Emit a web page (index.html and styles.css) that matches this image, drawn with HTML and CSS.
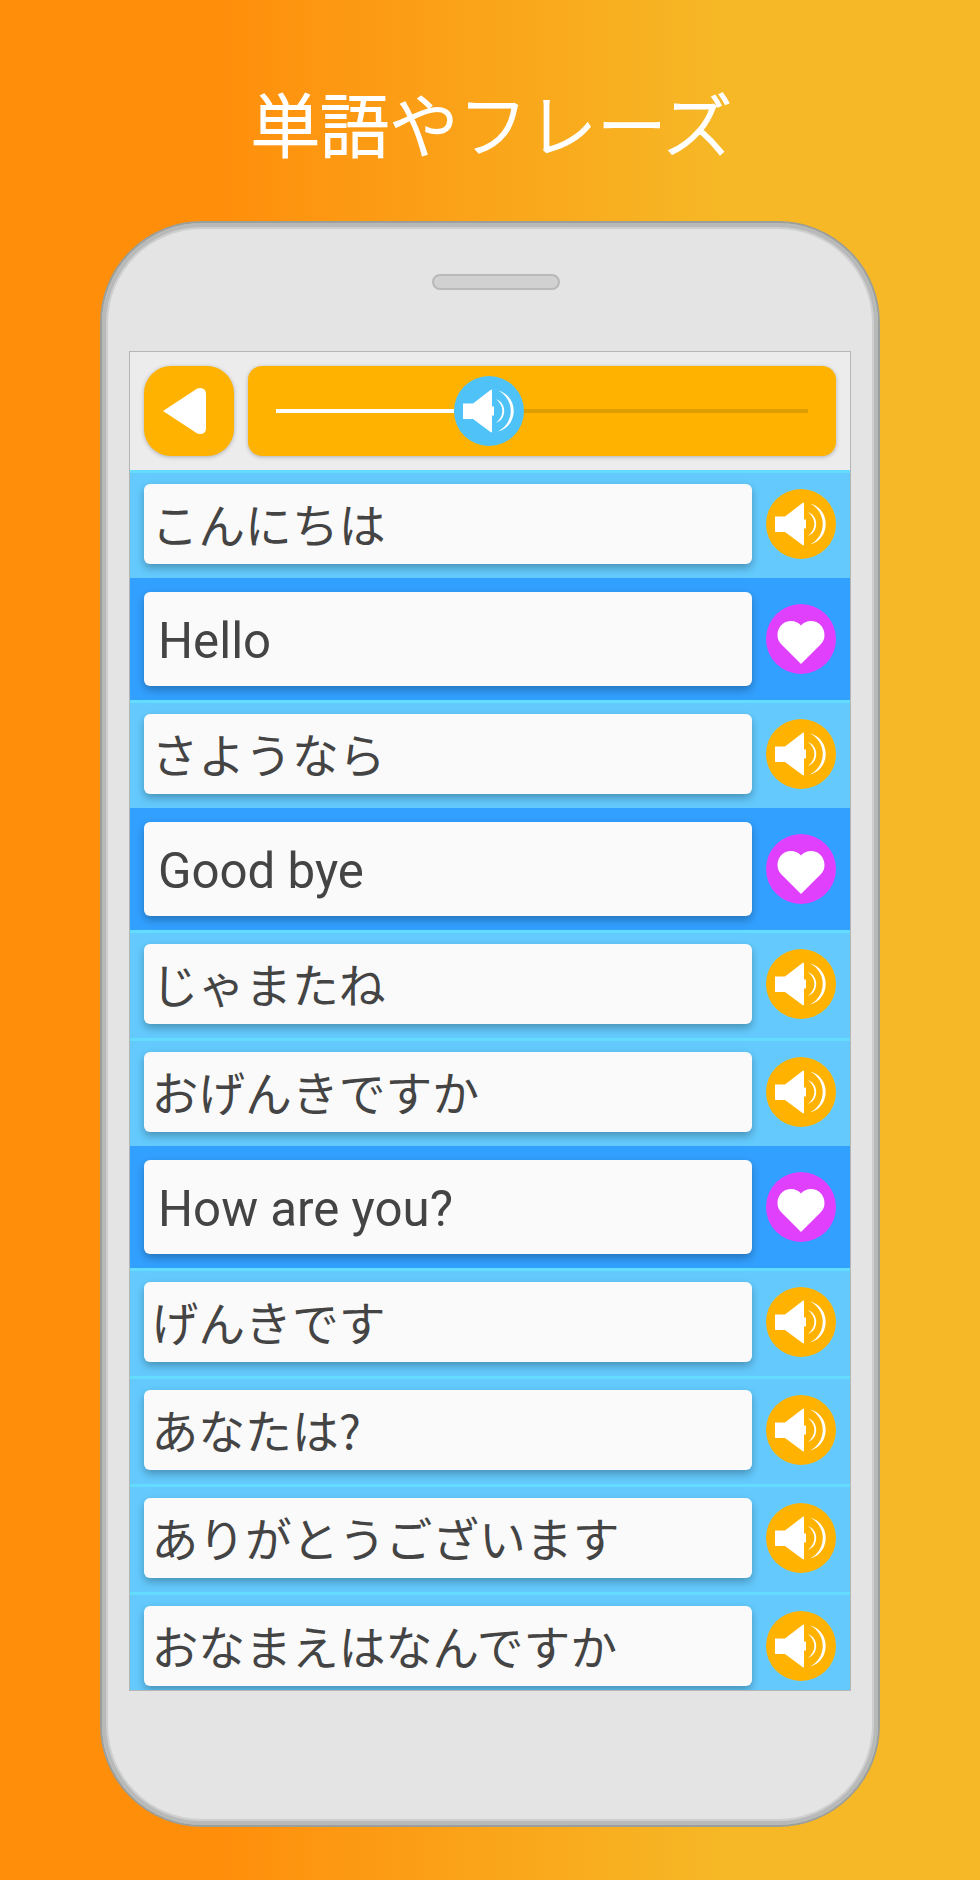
FILE: index.html
```html
<!DOCTYPE html>
<html lang="ja">
<head>
<meta charset="utf-8">
<title>単語やフレーズ</title>
<link rel="stylesheet" href="styles.css">
</head>
<body>
<svg class="sprite" aria-hidden="true">
  <symbol id="sound" viewBox="0 0 70 70">
    <path fill="#fff" d="M9 27.500H19L36.500 14L38 13.500V30.500H40V39.500H38V56.500L36.500 56L19 43H9Z"/>
    <path fill="#fff" d="M42 23C53 27 53 43 42 47C50.500 40 50.500 30 42 23Z"/>
    <path fill="#fff" d="M44 14.500C65 20 65 50 44 55.500C61 47 61 23 44 14.500Z"/>
  </symbol>
  <symbol id="heart" viewBox="0 0 70 70">
    <path fill="#fff" d="M35 60L15.500 40.500C12.500 37.500 11.500 34.500 11.500 31C11.500 23 17.500 17 25 17C29 17 32.500 18.500 35 21.500C37.500 18.500 41 17 45 17C52.500 17 58.500 23 58.500 31C58.500 34.500 57.500 37.500 54.500 40.500Z"/>
  </symbol>
</svg>
<main class="page">
  <h1 class="title">単語やフレーズ</h1>
  <div class="phone">
    <div class="earpiece"></div>
    <section class="screen">
      <header class="toolbar">
        <button class="back" aria-label="Back"><svg viewBox="0 0 90 90"><path fill="#fff" d="M19 45L51 24Q53 22 56 22Q62 22 62 28V62Q62 68 56 68Q53 68 51 66Z"/></svg></button>
        <div class="slider">
          <span class="played"></span>
          <svg class="disc thumb"><use href="#sound"/></svg>
          <span class="remaining"></span>
        </div>
      </header>
      <div class="row"><p class="card">こんにちは</p><svg class="disc sound"><use href="#sound"/></svg></div>
      <div class="row english"><p class="card">Hello</p><svg class="disc heart"><use href="#heart"/></svg></div>
      <div class="row"><p class="card">さようなら</p><svg class="disc sound"><use href="#sound"/></svg></div>
      <div class="row english"><p class="card">Good bye</p><svg class="disc heart"><use href="#heart"/></svg></div>
      <div class="row"><p class="card">じゃまたね</p><svg class="disc sound"><use href="#sound"/></svg></div>
      <div class="row"><p class="card">おげんきですか</p><svg class="disc sound"><use href="#sound"/></svg></div>
      <div class="row english"><p class="card">How are you?</p><svg class="disc heart"><use href="#heart"/></svg></div>
      <div class="row"><p class="card">げんきです</p><svg class="disc sound"><use href="#sound"/></svg></div>
      <div class="row"><p class="card">あなたは?</p><svg class="disc sound"><use href="#sound"/></svg></div>
      <div class="row"><p class="card">ありがとうございます</p><svg class="disc sound"><use href="#sound"/></svg></div>
      <div class="row"><p class="card">おなまえはなんですか</p><svg class="disc sound"><use href="#sound"/></svg></div>
    </section>
  </div>
</main>
</body>
</html>
```
FILE: styles.css
```css
* { box-sizing: border-box; }
body { margin: 0; }
.sprite { display: none; }
.page {
  height: 1880px;
  display: flex;
  flex-direction: column;
  align-items: center;
  background: linear-gradient(90deg, #ff8e0b 0, #ff8e0b 215px, #f6b826 725px, #f6b826 100%);
  overflow: hidden;
}
.title {
  margin: 0;
  height: 221px;
  padding: 72px 0 0 3px;
  font: 300 69.3px/100px "Noto Sans CJK JP", sans-serif;
  color: #fff;
  -webkit-text-stroke: 2px #fff;
  stroke-linejoin: round;
  white-space: nowrap;
}
.phone {
  width: 780px;
  height: 1606px;
  flex: none;
  border: 2px solid #9b9f9c;
  border-radius: 102px;
  background: #e4e4e4;
  box-shadow: inset 0 0 0 4px #b8bab9, inset 0 0 0 6px #cfcfcf;
  display: flex;
  flex-direction: column;
  align-items: center;
}
.earpiece {
  width: 128px;
  height: 16px;
  margin: 51px 0 61px 12px;
  border: 2px solid #b9b9b9;
  border-radius: 8px;
  background: #d1d1d1;
  flex: none;
}
.screen {
  width: 722px;
  height: 1340px;
  flex: none;
  border: 1px solid #b4b6b6;
  background: #ececec;
  overflow: hidden;
}
.toolbar {
  height: 118px;
  padding: 14px 14px;
  display: flex;
  gap: 14px;
}
.back, .slider {
  height: 90px;
  background: #ffb300;
  box-shadow: 0 1px 4px rgba(0, 0, 0, .25);
}
.back { width: 90px; padding: 0; border: 0; border-radius: 27px; }
.back svg { display: block; width: 90px; height: 90px; }
.slider {
  flex: 1;
  padding: 0 28px;
  display: flex;
  align-items: center;
  border-radius: 14px;
}
.played { width: 178px; height: 4px; background: #fff; }
.remaining { flex: 1; height: 4px; background: #de9d00; }
.disc { width: 70px; height: 70px; border-radius: 50%; flex: none; display: block; }
.thumb { background: #4fc3f7; }
.sound { background: #ffb300; }
.heart { background: #e040fb; }
.row {
  height: 108px;
  padding: 0 14px;
  display: flex;
  align-items: center;
  gap: 14px;
  background: #64cafd;
  box-shadow: inset 0 3px #64dcff;
}
.english { height: 122px; background: #32a0ff; box-shadow: none; }
.card {
  width: 608px;
  height: 80px;
  margin: 0;
  padding: 0 7.5px;
  border-radius: 6px;
  background: #fafafa;
  box-shadow: 0 4px 8px rgba(0, 0, 0, .28);
  color: #444;
  font: 400 46.8px/78px "Noto Sans CJK JP", sans-serif;
  white-space: nowrap;
}
.english .card {
  height: 94px;
  padding-left: 14px;
  font: 400 49.2px/98px Roboto, sans-serif;
}
```
